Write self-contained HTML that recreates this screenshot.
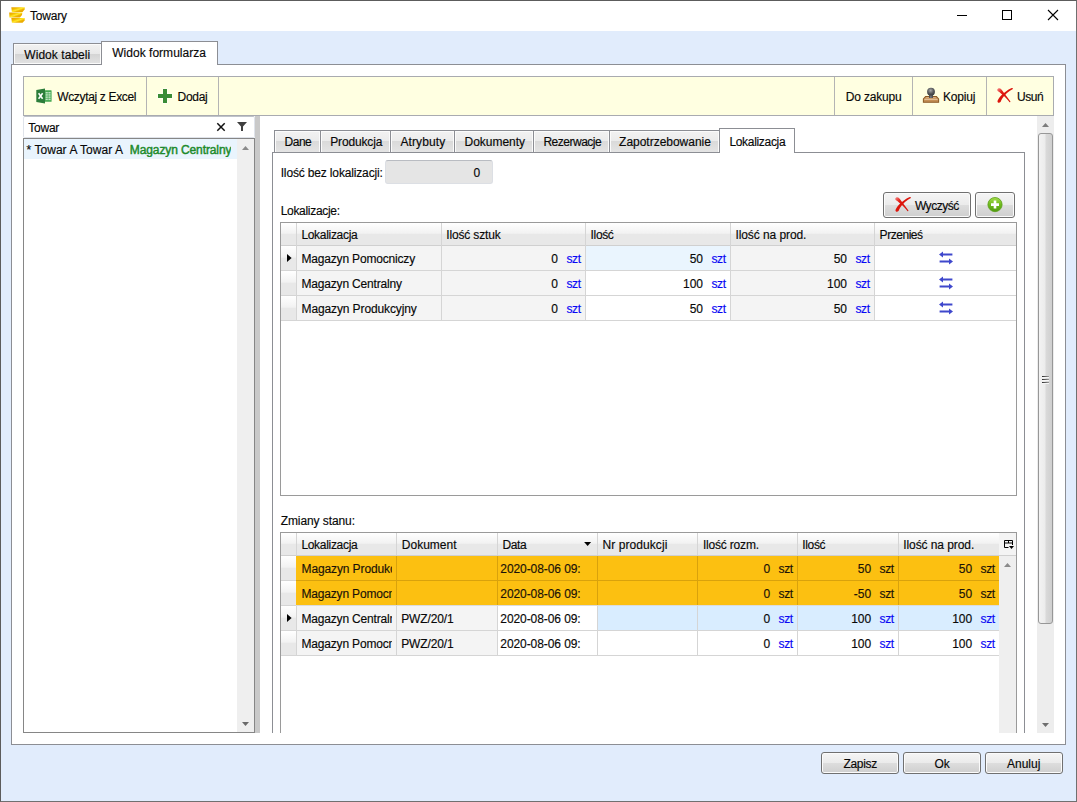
<!DOCTYPE html>
<html><head><meta charset="utf-8"><title>Towary</title>
<style>
*{box-sizing:border-box;margin:0;padding:0}
html,body{width:1077px;height:802px;overflow:hidden}
body{position:relative;background:#e1ecfc;font-family:"Liberation Sans",sans-serif;font-size:12px;color:#000;line-height:14px}
.a{position:absolute}
.t{position:absolute;white-space:pre;line-height:14px;height:14px;color:#080808;-webkit-text-stroke:0.15px currentColor}
svg{position:absolute;overflow:visible}
.btn{position:absolute;border:1px solid #707070;border-radius:3px;background:linear-gradient(#f5f5f5 0%,#ebebeb 49%,#dddddd 51%,#cfcfcf 100%);box-shadow:inset 0 0 0 1px #fbfbfb}
.tab{position:absolute;border:1px solid #8c8e94;border-bottom:none;background:linear-gradient(#f2f2f2 0%,#e8e8e8 50%,#d4d4d4 50%,#e3e3e3 100%);box-shadow:inset 1px 1px 0 #fbfbfb,inset -1px -1px 0 #fbfbfb}
.tab.on{background:#fff;box-shadow:none}
.tab.in{box-shadow:inset 1px 1px 0 #fbfbfb,inset -1px 0 0 #fbfbfb;background:linear-gradient(#f2f2f2 0%,#ebebeb 50%,#dadada 50%,#e4e4e4 100%)}
.hdr{position:absolute;background:linear-gradient(#ffffff 0%,#f2f2f2 47%,#e8e8e8 50%,#e8e8e8 100%)}
.vl{position:absolute;width:1px;background:#d5d5d5}
.hl{position:absolute;height:1px;background:#d5d5d5}
</style></head><body>
<div class="a" style="left:1px;top:1px;width:1075px;height:30px;background:#fff"></div>
<svg style="left:9px;top:7px" width="16" height="16" viewBox="0 0 16 16"><defs><linearGradient id="gd" x1="0" y1="0" x2="1" y2="1"><stop offset="0" stop-color="#e39b00"/><stop offset=".3" stop-color="#f3bd00"/><stop offset=".5" stop-color="#ffe92a"/><stop offset=".66" stop-color="#efb200"/><stop offset=".85" stop-color="#e8a600"/><stop offset="1" stop-color="#fbd800"/></linearGradient></defs>
<path d="M2.3 0.2H15.8L15.6 2.6L13.6 4.9H2.9Z" fill="url(#gd)"/><path d="M0.2 5.4H13.4L13 8L11 10.4H0.4Z" fill="url(#gd)"/><path d="M2.3 11H15.8L15.6 13.4L13.6 15.8H2.9Z" fill="url(#gd)"/></svg>
<div class="t" style="left:30.00px;top:8.84px;letter-spacing:-0.219px;">Towary</div>
<div class="a" style="left:957px;top:15px;width:10px;height:1px;background:#000"></div>
<div class="a" style="left:1002px;top:10px;width:10px;height:10px;border:1px solid #000"></div>
<svg style="left:1048px;top:10px" width="10" height="10" viewBox="0 0 10 10"><path d="M0 0L10 10M10 0L0 10" stroke="#000" stroke-width="1.1" fill="none"/></svg>
<div class="a" style="left:11px;top:64px;width:1055px;height:681px;background:#fff;border:1px solid #8c8e94"></div>
<div class="tab" style="left:13px;top:43px;width:89px;height:21px;"></div>
<div class="tab on" style="left:101px;top:41px;width:117px;height:24px;"></div>
<div class="t" style="left:24.30px;top:47.84px;letter-spacing:0.052px;">Widok tabeli</div>
<div class="t" style="left:112.20px;top:45.84px;letter-spacing:0.028px;">Widok formularza</div>
<div class="a" style="left:23px;top:76px;width:1031px;height:40px;background:#ffffe1;border:1px solid #a9abb0"></div>
<div class="a" style="left:146px;top:77px;width:1px;height:38px;background:#b4b4b4"></div>
<div class="a" style="left:218px;top:77px;width:1px;height:38px;background:#b4b4b4"></div>
<div class="a" style="left:834px;top:77px;width:1px;height:38px;background:#b4b4b4"></div>
<div class="a" style="left:912px;top:77px;width:1px;height:38px;background:#b4b4b4"></div>
<div class="a" style="left:986px;top:77px;width:1px;height:38px;background:#b4b4b4"></div>
<svg style="left:36px;top:88px" width="16" height="16" viewBox="0 0 16 16"><rect x="8.5" y="2.2" width="7.1" height="11.6" rx=".6" fill="#43a851"/><g fill="#bfe3c3"><rect x="9.6" y="4" width="2.2" height="1.5"/><rect x="12.4" y="4" width="2.2" height="1.5"/><rect x="9.6" y="6.2" width="2.2" height="1.5"/><rect x="12.4" y="6.2" width="2.2" height="1.5"/><rect x="9.6" y="8.4" width="2.2" height="1.5"/><rect x="12.4" y="8.4" width="2.2" height="1.5"/><rect x="9.6" y="10.6" width="2.2" height="1.5"/><rect x="12.4" y="10.6" width="2.2" height="1.5"/></g><path d="M0.3 2.1L9 0.5V15.5L0.3 13.9Z" fill="#2c7d3a"/><path d="M2.6 5.2L6.6 10.8M6.6 5.2L2.6 10.8" stroke="#fff" stroke-width="1.5" fill="none"/></svg>
<div class="t" style="left:57.20px;top:89.84px;letter-spacing:-0.334px;">Wczytaj z Excel</div>
<svg style="left:157px;top:88px" width="16" height="16" viewBox="0 0 16 16"><path d="M6 1H10V6H15V10H10V15H6V10H1V6H6Z" fill="#3a8c36" stroke="#fff" stroke-width="1.2" stroke-opacity=".85" paint-order="stroke"/></svg>
<div class="t" style="left:177.50px;top:89.84px;letter-spacing:-0.272px;">Dodaj</div>
<div class="t" style="left:845.80px;top:89.84px;letter-spacing:-0.175px;">Do zakupu</div>
<svg style="left:923px;top:87px" width="16" height="16" viewBox="0 0 16 16"><defs><radialGradient id="kn" cx=".45" cy=".35" r=".6"><stop offset="0" stop-color="#a9a9a9"/><stop offset=".6" stop-color="#5b5d60"/><stop offset="1" stop-color="#3c3e41"/></radialGradient></defs>
<path d="M2.6 9.4H13.4L15.6 12V15.3H0.4V12Z" fill="#c58f55" stroke="#8c5a26" stroke-width="1.05"/><path d="M1.4 12.3H14.6" stroke="#e6c9a6" stroke-width="1"/><path d="M3.2 10.6H12.8" stroke="#dcb88c" stroke-width=".8"/>
<rect x="6.1" y="7" width="3.8" height="4" fill="#4a4c50"/><rect x="7.3" y="7" width="1.2" height="4" fill="#7e8085"/><circle cx="8" cy="4.7" r="3.9" fill="url(#kn)"/></svg>
<div class="t" style="left:942.90px;top:89.84px;letter-spacing:-0.143px;">Kopiuj</div>
<svg style="left:997px;top:88px" width="16" height="15" viewBox="0 0 16 15"><defs><linearGradient id="rx" x1="0" y1="0" x2="1" y2="1"><stop offset="0" stop-color="#f58b8b"/><stop offset=".3" stop-color="#e41b12"/><stop offset="1" stop-color="#d01008"/></linearGradient></defs>
<path id="xs" d="M0.3 1.6C1 0 3 -0.2 4.2 1.2C6 3.6 11.6 10.4 13.4 13.6C13.6 14.2 12.8 14.4 12.4 13.9C9.6 10.6 4.4 5.4 1.4 3.6C0.4 3 0 2.4 0.3 1.6Z" fill="url(#rx)"/>
<path id="xs2" d="M15.8 0.4C15.9 1 15.4 1.3 14.6 1.7C10.4 4 5.2 9.2 3.8 13.6C3.4 14.9 1.4 15 0.8 14.2C0.2 13.4 0.6 12.4 1.2 11.4C3.6 7 10.6 1.6 14.8 0C15.4 -0.1 15.7 0 15.8 0.4Z" fill="#dc150c"/></svg>
<div class="t" style="left:1017.00px;top:89.84px;letter-spacing:-0.454px;">Usuń</div>
<div class="a" style="left:23px;top:116px;width:232px;height:22px;background:#fff;border:1px solid #dfe3ea;border-top-color:#bfc3ca;border-radius:2px"></div>
<div class="t" style="left:28.30px;top:120.84px;letter-spacing:-0.243px;">Towar</div>
<svg style="left:217px;top:123px" width="8" height="8" viewBox="0 0 8 8"><path d="M0.3 0.3L7.7 7.7M7.7 0.3L0.3 7.7" stroke="#111" stroke-width="1.5" fill="none"/></svg>
<svg style="left:237px;top:122px" width="10" height="9" viewBox="0 0 10 9"><path d="M0 0H10L6 4.6V9H4V4.6Z" fill="#404040"/></svg>
<div class="a" style="left:23px;top:138px;width:232px;height:595px;background:#fff;border:1px solid #868686"></div>
<div class="a" style="left:24px;top:139px;width:213px;height:20px;background:#e9f4fd"></div>
<div class="t" style="left:26.50px;top:142.84px;letter-spacing:0.051px;">* Towar A Towar A</div>
<div class="t" style="left:129.80px;top:142.84px;letter-spacing:-0.105px;width:101px;overflow:hidden;color:#1c8a2c;-webkit-text-stroke:0.45px #1c8a2c;">Magazyn Centralny</div>
<div class="a" style="left:237px;top:139px;width:17px;height:593px;background:#efefef"></div>
<svg style="left:242px;top:146px" width="7" height="4" viewBox="0 0 7 4"><path d="M0 4L3.5 0L7 4Z" fill="#8a8a8a"/></svg>
<svg style="left:242px;top:722px" width="7" height="4" viewBox="0 0 7 4"><path d="M0 0L3.5 4L7 0Z" fill="#6a6a6a"/></svg>
<div class="a" style="left:255px;top:116px;width:5px;height:617px;background:#c9c9c9"></div>
<div class="a" style="left:1037px;top:116px;width:17px;height:617px;background:#ededed"></div>
<svg style="left:1042px;top:123px" width="7" height="4" viewBox="0 0 7 4"><path d="M0 4L3.5 0L7 4Z" fill="#7d7d7d"/></svg>
<svg style="left:1042px;top:723px" width="7" height="4" viewBox="0 0 7 4"><path d="M0 0L3.5 4L7 0Z" fill="#6e6e6e"/></svg>
<div class="a" style="left:1038px;top:133px;width:15px;height:491px;border:1px solid #979797;border-radius:3px;background:linear-gradient(90deg,#f3f3f3 0%,#ececec 45%,#d9d9d9 55%,#cfcfcf 100%)"></div>
<div class="a" style="left:1042px;top:376px;width:7px;height:1px;background:linear-gradient(90deg,#2e2e2e,#9a9a9a)"></div>
<div class="a" style="left:1042px;top:377px;width:7px;height:1px;background:#f6f6f6"></div>
<div class="a" style="left:1042px;top:379px;width:7px;height:1px;background:linear-gradient(90deg,#2e2e2e,#9a9a9a)"></div>
<div class="a" style="left:1042px;top:380px;width:7px;height:1px;background:#f6f6f6"></div>
<div class="a" style="left:1042px;top:382px;width:7px;height:1px;background:linear-gradient(90deg,#2e2e2e,#9a9a9a)"></div>
<div class="a" style="left:1042px;top:383px;width:7px;height:1px;background:#f6f6f6"></div>
<div class="a" style="left:272px;top:152px;width:753px;height:581px;background:#fff;border:1px solid #8c8e94;border-bottom:none"></div>
<div class="tab in" style="left:274px;top:130px;width:47px;height:22px;"></div>
<div class="tab in" style="left:320px;top:130px;width:71px;height:22px;"></div>
<div class="tab in" style="left:390px;top:130px;width:65px;height:22px;"></div>
<div class="tab in" style="left:454px;top:130px;width:80px;height:22px;"></div>
<div class="tab in" style="left:533px;top:130px;width:77px;height:22px;"></div>
<div class="tab in" style="left:609px;top:130px;width:111px;height:22px;"></div>
<div class="tab on" style="left:719px;top:128px;width:76px;height:25px;"></div>
<div class="t" style="left:284.60px;top:134.84px;letter-spacing:-0.522px;">Dane</div>
<div class="t" style="left:330.20px;top:134.84px;letter-spacing:-0.153px;">Produkcja</div>
<div class="t" style="left:400.40px;top:134.84px;letter-spacing:0.123px;">Atrybuty</div>
<div class="t" style="left:464.50px;top:134.84px;letter-spacing:-0.023px;">Dokumenty</div>
<div class="t" style="left:543.40px;top:134.84px;letter-spacing:-0.490px;">Rezerwacje</div>
<div class="t" style="left:619.10px;top:134.84px;letter-spacing:-0.018px;">Zapotrzebowanie</div>
<div class="t" style="left:729.40px;top:134.84px;letter-spacing:-0.316px;">Lokalizacja</div>
<div class="t" style="left:280.70px;top:165.84px;letter-spacing:-0.153px;">Ilość bez lokalizacji:</div>
<div class="a" style="left:385px;top:160px;width:108px;height:24px;background:#e5e5e5;border:1px solid #dcdfe4;border-top-color:#b9bcc2;border-radius:3px"></div>
<div class="t" style="left:473.51px;top:165.84px;">0</div>
<div class="t" style="left:280.70px;top:203.84px;letter-spacing:-0.309px;">Lokalizacje:</div>
<div class="btn" style="left:883px;top:192px;width:88px;height:26px;"></div>
<div class="btn" style="left:975px;top:192px;width:40px;height:26px;"></div>
<svg style="left:895px;top:197px" width="16" height="15" viewBox="0 0 16 15"><use href="#xs" fill="url(#rx)"/><use href="#xs2"/></svg>
<div class="t" style="left:914.90px;top:198.84px;letter-spacing:-0.491px;">Wyczyść</div>
<svg style="left:987px;top:197px" width="16" height="16" viewBox="0 0 16 16"><defs><linearGradient id="gp" x1="0" y1="0" x2="0" y2="1"><stop offset="0" stop-color="#a6dc4e"/><stop offset=".5" stop-color="#6fbb1c"/><stop offset="1" stop-color="#4f9a10"/></linearGradient></defs><circle cx="8" cy="7.6" r="7.1" fill="url(#gp)" stroke="#5a9e1a" stroke-width=".8"/><path d="M6.7 3.6H9.3V6.3H12V8.9H9.3V11.6H6.7V8.9H4V6.3H6.7Z" fill="#fff"/></svg>
<div class="a" style="left:280px;top:222px;width:737px;height:274px;background:#fff;border:1px solid #9a9a9a"></div>
<div class="hdr" style="left:281px;top:223px;width:735px;height:22px;"></div>
<div class="a" style="left:281px;top:245px;width:735px;height:1px;background:#d0d0d0"></div>
<div class="hdr" style="left:281px;top:246px;width:15px;height:24px;"></div>
<div class="a" style="left:297px;top:246px;width:144px;height:24px;background:#f4f4f4"></div>
<div class="a" style="left:442px;top:246px;width:143px;height:24px;background:#f4f4f4"></div>
<div class="a" style="left:586px;top:246px;width:144px;height:24px;background:#eaf5fe"></div>
<div class="a" style="left:731px;top:246px;width:143px;height:24px;background:#f4f4f4"></div>
<div class="a" style="left:281px;top:270px;width:735px;height:1px;background:#d5d5d5"></div>
<div class="t" style="left:301.50px;top:251.84px;letter-spacing:-0.179px;">Magazyn Pomocniczy</div>
<div class="t" style="left:551.31px;top:251.84px;">0</div>
<div class="t" style="left:566.50px;top:251.84px;letter-spacing:-0.381px;color:#0808f4;">szt</div>
<div class="t" style="left:689.64px;top:251.84px;">50</div>
<div class="t" style="left:711.50px;top:251.84px;letter-spacing:-0.381px;color:#0808f4;">szt</div>
<div class="t" style="left:833.64px;top:251.84px;">50</div>
<div class="t" style="left:855.50px;top:251.84px;letter-spacing:-0.381px;color:#0808f4;">szt</div>
<svg style="left:939px;top:251px" width="14" height="14" viewBox="0 0 14 14"><path d="M0 3.5L4 0.4V2.4H13.4V4.6H4V6.6Z" fill="#3f48cc"/><path d="M14 10.5L10 7.4V9.4H0.6V11.6H10V13.6Z" fill="#3f48cc"/></svg>
<div class="hdr" style="left:281px;top:271px;width:15px;height:24px;"></div>
<div class="a" style="left:297px;top:271px;width:144px;height:24px;background:#f4f4f4"></div>
<div class="a" style="left:442px;top:271px;width:143px;height:24px;background:#f4f4f4"></div>
<div class="a" style="left:586px;top:271px;width:144px;height:24px;background:#fff"></div>
<div class="a" style="left:731px;top:271px;width:143px;height:24px;background:#f4f4f4"></div>
<div class="a" style="left:281px;top:295px;width:735px;height:1px;background:#d5d5d5"></div>
<div class="t" style="left:301.50px;top:276.84px;letter-spacing:-0.182px;">Magazyn Centralny</div>
<div class="t" style="left:551.31px;top:276.84px;">0</div>
<div class="t" style="left:566.50px;top:276.84px;letter-spacing:-0.381px;color:#0808f4;">szt</div>
<div class="t" style="left:682.97px;top:276.84px;">100</div>
<div class="t" style="left:711.50px;top:276.84px;letter-spacing:-0.381px;color:#0808f4;">szt</div>
<div class="t" style="left:826.97px;top:276.84px;">100</div>
<div class="t" style="left:855.50px;top:276.84px;letter-spacing:-0.381px;color:#0808f4;">szt</div>
<svg style="left:939px;top:276px" width="14" height="14" viewBox="0 0 14 14"><path d="M0 3.5L4 0.4V2.4H13.4V4.6H4V6.6Z" fill="#3f48cc"/><path d="M14 10.5L10 7.4V9.4H0.6V11.6H10V13.6Z" fill="#3f48cc"/></svg>
<div class="hdr" style="left:281px;top:296px;width:15px;height:24px;"></div>
<div class="a" style="left:297px;top:296px;width:144px;height:24px;background:#f4f4f4"></div>
<div class="a" style="left:442px;top:296px;width:143px;height:24px;background:#f4f4f4"></div>
<div class="a" style="left:586px;top:296px;width:144px;height:24px;background:#fff"></div>
<div class="a" style="left:731px;top:296px;width:143px;height:24px;background:#f4f4f4"></div>
<div class="a" style="left:281px;top:320px;width:735px;height:1px;background:#d5d5d5"></div>
<div class="t" style="left:301.50px;top:301.84px;letter-spacing:-0.115px;">Magazyn Produkcyjny</div>
<div class="t" style="left:551.31px;top:301.84px;">0</div>
<div class="t" style="left:566.50px;top:301.84px;letter-spacing:-0.381px;color:#0808f4;">szt</div>
<div class="t" style="left:689.64px;top:301.84px;">50</div>
<div class="t" style="left:711.50px;top:301.84px;letter-spacing:-0.381px;color:#0808f4;">szt</div>
<div class="t" style="left:833.64px;top:301.84px;">50</div>
<div class="t" style="left:855.50px;top:301.84px;letter-spacing:-0.381px;color:#0808f4;">szt</div>
<svg style="left:939px;top:301px" width="14" height="14" viewBox="0 0 14 14"><path d="M0 3.5L4 0.4V2.4H13.4V4.6H4V6.6Z" fill="#3f48cc"/><path d="M14 10.5L10 7.4V9.4H0.6V11.6H10V13.6Z" fill="#3f48cc"/></svg>
<div class="a" style="left:296px;top:223px;width:1px;height:98px;background:#d5d5d5"></div>
<div class="a" style="left:441px;top:223px;width:1px;height:98px;background:#d5d5d5"></div>
<div class="a" style="left:585px;top:223px;width:1px;height:98px;background:#d5d5d5"></div>
<div class="a" style="left:730px;top:223px;width:1px;height:98px;background:#d5d5d5"></div>
<div class="a" style="left:874px;top:223px;width:1px;height:98px;background:#d5d5d5"></div>
<svg style="left:287px;top:254px" width="5" height="8" viewBox="0 0 5 8"><path d="M0 0L4.6 4L0 8Z" fill="#000"/></svg>
<div class="t" style="left:301.40px;top:227.84px;letter-spacing:-0.307px;">Lokalizacja</div>
<div class="t" style="left:446.30px;top:227.84px;letter-spacing:-0.156px;">Ilość sztuk</div>
<div class="t" style="left:590.60px;top:227.84px;letter-spacing:-0.358px;">Ilość</div>
<div class="t" style="left:735.40px;top:227.84px;letter-spacing:-0.075px;">Ilość na prod.</div>
<div class="t" style="left:879.60px;top:227.84px;letter-spacing:-0.461px;">Przenieś</div>
<div class="t" style="left:280.70px;top:513.84px;letter-spacing:-0.090px;">Zmiany stanu:</div>
<div class="a" style="left:280px;top:532px;width:737px;height:201px;background:#fff;border:1px solid #9a9a9a;border-bottom:none"></div>
<div class="hdr" style="left:281px;top:533px;width:718px;height:22px;"></div>
<div class="a" style="left:999px;top:533px;width:17px;height:22px;background:#f4f4f4"></div>
<div class="a" style="left:281px;top:555px;width:735px;height:1px;background:#d0d0d0"></div>
<div class="hdr" style="left:281px;top:556px;width:15px;height:24px;"></div>
<div class="a" style="left:296px;top:556px;width:703px;height:24px;background:#fcc011"></div>
<div class="a" style="left:296px;top:580px;width:703px;height:1px;background:#d9a20c"></div>
<div class="a" style="left:281px;top:580px;width:15px;height:1px;background:#d5d5d5"></div>
<div class="a" style="left:396px;top:556px;width:1px;height:24px;background:#d9a20c"></div>
<div class="a" style="left:497px;top:556px;width:1px;height:24px;background:#d9a20c"></div>
<div class="a" style="left:597px;top:556px;width:1px;height:24px;background:#d9a20c"></div>
<div class="a" style="left:697px;top:556px;width:1px;height:24px;background:#d9a20c"></div>
<div class="a" style="left:797px;top:556px;width:1px;height:24px;background:#d9a20c"></div>
<div class="a" style="left:898px;top:556px;width:1px;height:24px;background:#d9a20c"></div>
<div class="t" style="left:301.50px;top:561.84px;letter-spacing:-0.115px;width:90px;overflow:hidden;color:#1a1208;">Magazyn Produkcyjny</div>
<div class="t" style="left:500.30px;top:561.84px;letter-spacing:-0.079px;color:#1a1208;">2020-08-06 09:</div>
<div class="t" style="left:763.51px;top:561.84px;color:#1a1208;">0</div>
<div class="t" style="left:778.50px;top:561.84px;letter-spacing:-0.315px;color:#1a1208;">szt</div>
<div class="t" style="left:857.84px;top:561.84px;color:#1a1208;">50</div>
<div class="t" style="left:879.50px;top:561.84px;letter-spacing:-0.315px;color:#1a1208;">szt</div>
<div class="t" style="left:958.84px;top:561.84px;color:#1a1208;">50</div>
<div class="t" style="left:980.50px;top:561.84px;letter-spacing:-0.315px;color:#1a1208;">szt</div>
<div class="hdr" style="left:281px;top:581px;width:15px;height:24px;"></div>
<div class="a" style="left:296px;top:581px;width:703px;height:24px;background:#fcc011"></div>
<div class="a" style="left:296px;top:605px;width:703px;height:1px;background:#dcdcdc"></div>
<div class="a" style="left:281px;top:605px;width:15px;height:1px;background:#d5d5d5"></div>
<div class="a" style="left:396px;top:581px;width:1px;height:24px;background:#d9a20c"></div>
<div class="a" style="left:497px;top:581px;width:1px;height:24px;background:#d9a20c"></div>
<div class="a" style="left:597px;top:581px;width:1px;height:24px;background:#d9a20c"></div>
<div class="a" style="left:697px;top:581px;width:1px;height:24px;background:#d9a20c"></div>
<div class="a" style="left:797px;top:581px;width:1px;height:24px;background:#d9a20c"></div>
<div class="a" style="left:898px;top:581px;width:1px;height:24px;background:#d9a20c"></div>
<div class="t" style="left:301.50px;top:586.84px;letter-spacing:-0.179px;width:90px;overflow:hidden;color:#1a1208;">Magazyn Pomocniczy</div>
<div class="t" style="left:500.30px;top:586.84px;letter-spacing:-0.079px;color:#1a1208;">2020-08-06 09:</div>
<div class="t" style="left:763.51px;top:586.84px;color:#1a1208;">0</div>
<div class="t" style="left:778.50px;top:586.84px;letter-spacing:-0.315px;color:#1a1208;">szt</div>
<div class="t" style="left:853.86px;top:586.84px;color:#1a1208;">-50</div>
<div class="t" style="left:879.50px;top:586.84px;letter-spacing:-0.315px;color:#1a1208;">szt</div>
<div class="t" style="left:958.84px;top:586.84px;color:#1a1208;">50</div>
<div class="t" style="left:980.50px;top:586.84px;letter-spacing:-0.315px;color:#1a1208;">szt</div>
<div class="hdr" style="left:281px;top:606px;width:15px;height:24px;"></div>
<div class="a" style="left:297px;top:606px;width:99px;height:24px;background:#f4f4f4"></div>
<div class="a" style="left:397px;top:606px;width:100px;height:24px;background:#f4f4f4"></div>
<div class="a" style="left:598px;top:606px;width:401px;height:24px;background:#d9edff"></div>
<div class="a" style="left:281px;top:630px;width:718px;height:1px;background:#d5d5d5"></div>
<div class="a" style="left:296px;top:606px;width:1px;height:25px;background:#d5d5d5"></div>
<div class="a" style="left:396px;top:606px;width:1px;height:25px;background:#d5d5d5"></div>
<div class="a" style="left:497px;top:606px;width:1px;height:25px;background:#d5d5d5"></div>
<div class="a" style="left:597px;top:606px;width:1px;height:25px;background:#d5d5d5"></div>
<div class="a" style="left:697px;top:606px;width:1px;height:25px;background:#d5d5d5"></div>
<div class="a" style="left:797px;top:606px;width:1px;height:25px;background:#d5d5d5"></div>
<div class="a" style="left:898px;top:606px;width:1px;height:25px;background:#d5d5d5"></div>
<div class="t" style="left:301.50px;top:611.84px;letter-spacing:-0.182px;width:90px;overflow:hidden;">Magazyn Centralny</div>
<div class="t" style="left:401.20px;top:611.84px;letter-spacing:-0.132px;">PWZ/20/1</div>
<div class="t" style="left:500.30px;top:611.84px;letter-spacing:-0.079px;">2020-08-06 09:</div>
<div class="t" style="left:763.51px;top:611.84px;">0</div>
<div class="t" style="left:778.50px;top:611.84px;letter-spacing:-0.315px;color:#0808f4;">szt</div>
<div class="t" style="left:851.17px;top:611.84px;">100</div>
<div class="t" style="left:879.50px;top:611.84px;letter-spacing:-0.315px;color:#0808f4;">szt</div>
<div class="t" style="left:952.17px;top:611.84px;">100</div>
<div class="t" style="left:980.50px;top:611.84px;letter-spacing:-0.315px;color:#0808f4;">szt</div>
<div class="hdr" style="left:281px;top:631px;width:15px;height:24px;"></div>
<div class="a" style="left:297px;top:631px;width:99px;height:24px;background:#f4f4f4"></div>
<div class="a" style="left:397px;top:631px;width:100px;height:24px;background:#f4f4f4"></div>
<div class="a" style="left:281px;top:655px;width:718px;height:1px;background:#d5d5d5"></div>
<div class="a" style="left:296px;top:631px;width:1px;height:25px;background:#d5d5d5"></div>
<div class="a" style="left:396px;top:631px;width:1px;height:25px;background:#d5d5d5"></div>
<div class="a" style="left:497px;top:631px;width:1px;height:25px;background:#d5d5d5"></div>
<div class="a" style="left:597px;top:631px;width:1px;height:25px;background:#d5d5d5"></div>
<div class="a" style="left:697px;top:631px;width:1px;height:25px;background:#d5d5d5"></div>
<div class="a" style="left:797px;top:631px;width:1px;height:25px;background:#d5d5d5"></div>
<div class="a" style="left:898px;top:631px;width:1px;height:25px;background:#d5d5d5"></div>
<div class="t" style="left:301.50px;top:636.84px;letter-spacing:-0.179px;width:90px;overflow:hidden;">Magazyn Pomocniczy</div>
<div class="t" style="left:401.20px;top:636.84px;letter-spacing:-0.132px;">PWZ/20/1</div>
<div class="t" style="left:500.30px;top:636.84px;letter-spacing:-0.079px;">2020-08-06 09:</div>
<div class="t" style="left:763.51px;top:636.84px;">0</div>
<div class="t" style="left:778.50px;top:636.84px;letter-spacing:-0.315px;color:#0808f4;">szt</div>
<div class="t" style="left:851.17px;top:636.84px;">100</div>
<div class="t" style="left:879.50px;top:636.84px;letter-spacing:-0.315px;color:#0808f4;">szt</div>
<div class="t" style="left:952.17px;top:636.84px;">100</div>
<div class="t" style="left:980.50px;top:636.84px;letter-spacing:-0.315px;color:#0808f4;">szt</div>
<div class="a" style="left:296px;top:533px;width:1px;height:22px;background:#d5d5d5"></div>
<div class="a" style="left:396px;top:533px;width:1px;height:22px;background:#d5d5d5"></div>
<div class="a" style="left:497px;top:533px;width:1px;height:22px;background:#d5d5d5"></div>
<div class="a" style="left:597px;top:533px;width:1px;height:22px;background:#d5d5d5"></div>
<div class="a" style="left:697px;top:533px;width:1px;height:22px;background:#d5d5d5"></div>
<div class="a" style="left:797px;top:533px;width:1px;height:22px;background:#d5d5d5"></div>
<div class="a" style="left:898px;top:533px;width:1px;height:22px;background:#d5d5d5"></div>
<svg style="left:287px;top:614px" width="5" height="8" viewBox="0 0 5 8"><path d="M0 0L4.6 4L0 8Z" fill="#000"/></svg>
<div class="t" style="left:301.40px;top:537.84px;letter-spacing:-0.307px;">Lokalizacja</div>
<div class="t" style="left:401.80px;top:537.84px;">Dokument</div>
<div class="t" style="left:502.40px;top:537.84px;letter-spacing:-0.315px;">Data</div>
<svg style="left:584.4px;top:542px" width="7.3" height="4" viewBox="0 0 7 4"><path d="M0 0L3.5 4L7 0Z" fill="#000"/></svg>
<div class="t" style="left:602.40px;top:537.84px;letter-spacing:0.081px;">Nr produkcji</div>
<div class="t" style="left:702.90px;top:537.84px;letter-spacing:-0.183px;">Ilość rozm.</div>
<div class="t" style="left:802.30px;top:537.84px;letter-spacing:-0.358px;">Ilość</div>
<div class="t" style="left:903.20px;top:537.84px;letter-spacing:-0.075px;">Ilość na prod.</div>
<svg style="left:1004px;top:540px" width="10" height="10" viewBox="0 0 10 10"><path d="M4.5 7.5H0.5V0.5H8.5V5M0.5 3H8.5M4.5 0.5V3" stroke="#000" stroke-width="1" fill="none"/><path d="M5 6H10L7.5 9Z" fill="#000"/></svg>
<div class="a" style="left:999px;top:556px;width:17px;height:177px;background:#efefef"></div>
<svg style="left:1004px;top:563px" width="7" height="4" viewBox="0 0 7 4"><path d="M0 4L3.5 0L7 4Z" fill="#8a8a8a"/></svg>
<div class="btn" style="left:821px;top:752px;width:78px;height:22px;"></div>
<div class="btn" style="left:903px;top:752px;width:78px;height:22px;"></div>
<div class="btn" style="left:985px;top:752px;width:78px;height:22px;"></div>
<div class="t" style="left:843.50px;top:756.84px;letter-spacing:-0.341px;">Zapisz</div>
<div class="t" style="left:934.50px;top:756.84px;">Ok</div>
<div class="t" style="left:1007.00px;top:756.84px;">Anuluj</div>
<div class="a" style="left:0px;top:0px;width:1077px;height:802px;border:1px solid #5c5c5c;border-right-color:#707070;border-bottom-color:#707070"></div>
</body></html>
